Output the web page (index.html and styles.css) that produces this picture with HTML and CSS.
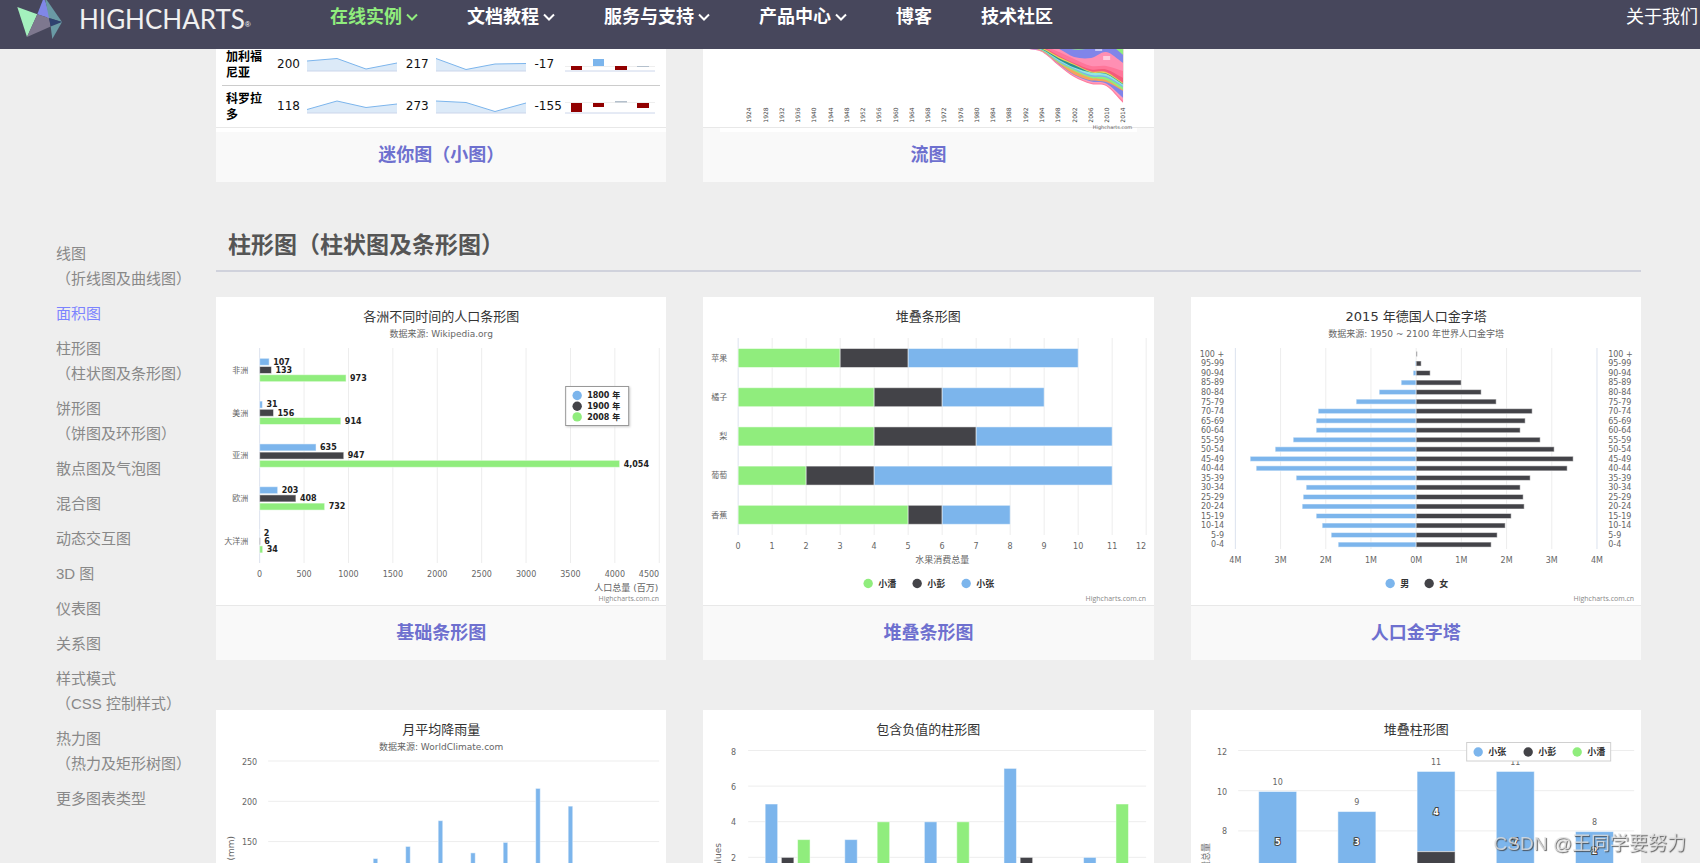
FILE: index.html
```html
<!DOCTYPE html>
<html lang="zh-CN">
<head>
<meta charset="utf-8">
<title>Highcharts 在线实例</title>
<link rel="stylesheet" href="styles.css">
</head>
<body>
<header class="topbar">
  <a class="logo" href="#" aria-label="Highcharts">
    <svg class="logo-mark" viewBox="16 0 48 40" aria-hidden="true">
      <path fill="#a4f0bd" d="M17.3 7 37.3 14.3 27 37z"/>
      <path fill="#8087e8" d="M44-3 37.3 14.3 49 18z"/>
      <path fill="#8087e8" d="M44-3 50.5 18.5 47 18z"/>
      <path fill="#6a9aa5" d="M44.7-3 62 22 49 18z"/>
      <path fill="#7e788f" d="M37.3 14.3 49 18 50.7 26.5 27 37z"/>
      <path fill="#2f4270" d="M49 18 62 22 50.7 26.5z"/>
      <path fill="#6a9aa5" d="M62 22 52.3 39 50.7 26.5z"/>
    </svg>
    <span class="wordmark">HIGHCHARTS</span><span class="reg">®</span>
  </a>
  <nav class="nav">
    <a class="nav-link active" href="#">在线实例<svg class="chevron" viewBox="0 0 12 8"><path d="M1 1.5 6 6.5 11 1.5"/></svg></a>
    <a class="nav-link" href="#">文档教程<svg class="chevron" viewBox="0 0 12 8"><path d="M1 1.5 6 6.5 11 1.5"/></svg></a>
    <a class="nav-link" href="#">服务与支持<svg class="chevron" viewBox="0 0 12 8"><path d="M1 1.5 6 6.5 11 1.5"/></svg></a>
    <a class="nav-link" href="#">产品中心<svg class="chevron" viewBox="0 0 12 8"><path d="M1 1.5 6 6.5 11 1.5"/></svg></a>
    <a class="nav-link" href="#">博客</a>
    <a class="nav-link" href="#">技术社区</a>
  </nav>
  <a class="about" href="#">关于我们</a>
</header>

<div class="page">
  <aside class="sidebar">
    <ul class="menu">
      <li><a href="#">线图<br>（折线图及曲线图）</a></li>
      <li><a class="current" href="#">面积图</a></li>
      <li><a href="#">柱形图<br>（柱状图及条形图）</a></li>
      <li><a href="#">饼形图<br>（饼图及环形图）</a></li>
      <li><a href="#">散点图及气泡图</a></li>
      <li><a href="#">混合图</a></li>
      <li><a href="#">动态交互图</a></li>
      <li><a href="#">3D 图</a></li>
      <li><a href="#">仪表图</a></li>
      <li><a href="#">关系图</a></li>
      <li><a href="#">样式模式<br>（CSS 控制样式）</a></li>
      <li><a href="#">热力图<br>（热力及矩形树图）</a></li>
      <li><a href="#">更多图表类型</a></li>
    </ul>
  </aside>

  <main class="content">
    <div class="cards">
      <article class="card">
        <div class="spark-wrap">
          <table class="spark">
            <tr>
              <th scope="row">加利福尼亚</th>
              <td>200</td>
              <td><svg class="mini" viewBox="0 0 90 16"><path class="fill" d="M0 5 30 2.5 59 13 90 7V15H0z"/><path class="line" d="M0 5 30 2.5 59 13 90 7"/><path class="base" d="M0 15H90"/></svg></td>
              <td>217</td>
              <td><svg class="mini" viewBox="0 0 90 16"><path class="fill" d="M0 2.5 30 13.5 59 8 90 7.500V15H0z"/><path class="line" d="M0 2.5 30 13.5 59 8 90 7.500"/><path class="base" d="M0 15H90"/></svg></td>
              <td>-17</td>
              <td><svg class="mini" viewBox="0 0 90 16"><path class="zero" d="M0 10.500H90"/><path class="base" d="M0 15H90"/><path class="neg" d="M6 10h11v4H6zM50 10h12v4H50z"/><path class="pos" d="M28 3h11v7H28z"/><path class="nil" d="M72 10h12v1H72z"/></svg></td>
            </tr>
            <tr>
              <th scope="row">科罗拉多</th>
              <td>118</td>
              <td><svg class="mini" viewBox="0 0 90 16"><path class="fill" d="M0 11.500 30 3 59 9.500 90 6V15H0z"/><path class="line" d="M0 11.500 30 3 59 9.500 90 6"/><path class="base" d="M0 15H90"/></svg></td>
              <td>273</td>
              <td><svg class="mini" viewBox="0 0 90 16"><path class="fill" d="M0 3 30 4.500 59 13.500 90 5V15H0z"/><path class="line" d="M0 3 30 4.500 59 13.500 90 5"/><path class="base" d="M0 15H90"/></svg></td>
              <td>-155</td>
              <td><svg class="mini" viewBox="0 0 90 16"><path class="zero" d="M0 4.500H90"/><path class="base" d="M0 15H90"/><path class="neg" d="M6 5h11v9H6zM28 5h11v4H28zM72 5h12v5H72z"/><path class="nil" d="M50 3h12v1.500H50z"/></svg></td>
            </tr>
          </table>
        </div>
        <h3 class="caption peek"><a href="#">迷你图（小图）</a></h3>
      </article>
      <article class="card">
        <svg class="chart short" id="stream" viewBox="0 0 450 78"></svg>
        <h3 class="caption peek inset"><a href="#">流图</a></h3>
      </article>
    </div>

    <h2 class="section-title">柱形图（柱状图及条形图）</h2>

    <div class="cards">
      <article class="card">
        <svg class="chart" id="bar" viewBox="0 0 450 308"></svg>
        <h3 class="caption"><a href="#">基础条形图</a></h3>
      </article>
      <article class="card">
        <svg class="chart" id="stacked-bar" viewBox="0 0 450 308"></svg>
        <h3 class="caption"><a href="#">堆叠条形图</a></h3>
      </article>
      <article class="card">
        <svg class="chart" id="pyramid" viewBox="0 0 450 308"></svg>
        <h3 class="caption"><a href="#">人口金字塔</a></h3>
      </article>
      <article class="card">
        <svg class="chart" id="rain" viewBox="0 0 450 308"></svg>
      </article>
      <article class="card">
        <svg class="chart" id="negative" viewBox="0 0 450 308"></svg>
      </article>
      <article class="card">
        <svg class="chart" id="stacked-column" viewBox="0 0 450 308"></svg>
      </article>
    </div>
  </main>
</div>
<div class="watermark">CSDN @王同学要努力</div>
<script src="charts.js"></script>
</body>
</html>
```

FILE: styles.css
```css
* {
  box-sizing: border-box;
}

body {
  margin: 0;
  height: 100vh;
  overflow: hidden;
  background: #eeeeee;
  font-family: "Liberation Sans", "Noto Sans CJK SC", sans-serif;
  color: #333;
}

a {
  color: inherit;
  text-decoration: none;
}

.topbar {
  display: flex;
  align-items: flex-start;
  height: 49px;
  padding: 0 2px 0 16px;
  background: #47475c;
  color: #fff;
}

.logo {
  display: flex;
  width: 314px;
  flex: none;
}

.logo-mark {
  width: 48px;
  height: 40px;
}

.wordmark {
  margin-left: 15px;
  font: 400 26px/38px Lato, sans-serif;
  color: #f0f0f0;
}

.reg {
  font-size: 8px;
  line-height: 50px;
}

.nav {
  display: flex;
  flex: 1;
  gap: 49px;
}

.nav-link {
  display: flex;
  align-items: center;
  gap: 4px;
  font-size: 18px;
  font-weight: 700;
  line-height: 34px;
}

.active {
  color: #90ed7d;
}

.chevron {
  width: 12px;
  height: 8px;
  fill: none;
  stroke: currentColor;
  stroke-width: 2;
}

.about {
  font-size: 18px;
  line-height: 34px;
}

.page {
  display: grid;
  grid-template-columns: 216px 1fr;
  padding-right: 59px;
}

.sidebar {
  padding: 192px 0 0 56px;
}

.menu {
  display: grid;
  gap: 10px;
  margin: 0;
  padding: 0;
  list-style: none;
  font-size: 15px;
  line-height: 25px;
  color: #888;
  white-space: nowrap;
}

.current {
  color: #7b83ff;
}

.cards {
  display: grid;
  grid-template-columns: repeat(3, minmax(0, 1fr));
  gap: 50px 37px;
}

.card {
  background: #fff;
}

.chart {
  display: block;
  width: 100%;
  height: 308px;
  font-family: "DejaVu Sans", "Noto Sans CJK SC", sans-serif;
  overflow: visible;
}

.short {
  position: relative;
  z-index: 1;
  height: 78px;
}

.caption {
  position: relative;
  margin: 0;
  border-top: 1px solid #e8e8e8;
  background: #f9f9f9;
  font-size: 18px;
  line-height: 54px;
  text-align: center;
  color: #6e70cf;
}

.peek::before {
  content: "";
  position: absolute;
  top: 0;
  left: 0;
  right: 0;
  height: 4px;
  background: #fff;
}

.inset::before {
  left: 17px;
  right: 17px;
}

.section-title {
  margin: 47px 0 25px;
  padding: 0 12px 9px;
  border-bottom: 2px solid #d0d2dc;
  font-size: 23px;
  line-height: 32px;
  color: #555;
}

.spark-wrap {
  height: 78px;
  padding: 0 6px;
}

.spark {
  width: 100%;
  border-collapse: collapse;
  table-layout: fixed;
  font-family: "DejaVu Sans", "Noto Sans CJK SC", sans-serif;
  font-size: 12px;
  line-height: 16px;
  color: #111;
}

.spark tr {
  height: 36px;
  border-bottom: 1px solid #ccc;
  vertical-align: top;
}

.spark tr + tr {
  height: 42px;
}

.spark th {
  width: 52px;
  padding: 0 10px 0 4px;
  text-align: left;
  color: #000;
}

.spark td {
  padding: 7px 0 0;
}

.spark tr + tr th {
  padding-top: 5px;
}

.spark tr + tr td {
  padding-top: 12px;
}

.spark td:nth-child(even) {
  width: 33px;
  padding-left: 3px;
}

.mini {
  display: block;
  width: 90px;
  height: 16px;
}

.fill {
  fill: #dceaf8;
}

.line {
  fill: none;
  stroke: #7cb5ec;
}

.base {
  stroke: #ccd6eb;
}

.zero {
  stroke: #eee;
}

.neg {
  fill: #910000;
}

.pos {
  fill: #7cb5ec;
}

.nil {
  fill: #b4c0cc;
}

.grid {
  stroke: #ededed;
}

.axis {
  stroke: #dce2ee;
}

.bar {
  stroke: #fff;
  stroke-opacity: 0.5;
}

.title {
  font-size: 13px;
  fill: #333;
}

.sub {
  font-size: 9px;
  fill: #666;
}

.label {
  font-size: 8px;
  fill: #666;
}

.value {
  font-size: 8px;
  font-weight: 700;
  fill: #222;
}

.key {
  font-size: 9px;
  font-weight: 700;
  fill: #333;
}

.inner {
  font-size: 8px;
  font-weight: 700;
  fill: #fff;
  stroke: #444;
  stroke-width: 2;
  paint-order: stroke;
}

.credit {
  font-family: "Open Sans", sans-serif;
  font-size: 7px;
  fill: #888;
}

.year {
  font-size: 6px;
  fill: #444;
}

.tiny {
  font-size: 5px;
  fill: #666;
}

.box {
  fill: #fff;
  stroke: #d0d0d0;
}

.box-dark {
  fill: #fff;
  stroke: #999;
  filter: drop-shadow(1px 1px 1px #ccc);
}

.watermark {
  position: fixed;
  right: 14px;
  bottom: 4px;
  z-index: 2;
  font-size: 19px;
  line-height: 30px;
  color: rgba(225, 225, 225, 0.8);
  text-shadow: 1px 1px 1px rgba(60, 60, 60, 0.8);
}
```

FILE: charts.js
```js
const BLUE = '#7cb5ec', DARK = '#434348', GREEN = '#90ed7d';
const SIZES = { title: 13, sub: 9, label: 8, value: 8, key: 9, inner: 8, credit: 7, year: 6, tiny: 5 };

// y is the vertical middle of the text
function text(x, y, str, cls, anchor = 'middle', turn = false) {
  const drop = SIZES[cls] * 0.36;
  const place = turn
    ? `transform="translate(${x + drop} ${y}) rotate(-90)"`
    : `x="${x}" y="${y + drop}"`;
  return `<text ${place} class="${cls}" text-anchor="${anchor}">${str}</text>`;
}
const line = (x1, y1, x2, y2, cls = 'grid') =>
  `<path class="${cls}" d="M${x1} ${y1}L${x2} ${y2}"/>`;
const rect = (x, y, w, h, fill) =>
  `<rect class="bar" x="${x}" y="${y}" width="${w}" height="${h}" fill="${fill}"/>`;
const dot = (x, y, fill) => `<circle cx="${x}" cy="${y}" r="4.7" fill="${fill}"/>`;
const credit = () => text(443, 301, 'Highcharts.com.cn', 'credit', 'end');
const draw = (id, parts) => { document.getElementById(id).innerHTML = parts.join(''); };

function bar() {
  const s = [text(225, 19, '各洲不同时间的人口条形图', 'title'), text(225, 37, '数据来源: Wikipedia.org', 'sub')];
  const x0 = 43.5, step = 44.4;
  for (let i = 0; i < 10; i++) {
    s.push(line(x0 + i * step, 51, x0 + i * step, 266, i ? 'grid' : 'axis'));
    s.push(i === 9 ? text(443, 277, '4500', 'label', 'end') : text(x0 + i * step, 277, i * 500, 'label'));
  }
  [['非洲', 107, 133, 973], ['美洲', 31, 156, 914], ['亚洲', 635, 947, 4054], ['欧洲', 203, 408, 732], ['大洋洲', 2, 6, 34]]
    .forEach(([name, ...vals], i) => {
      const cy = 73 + i * 42.8;
      s.push(text(32, cy, name, 'label', 'end'));
      vals.forEach((v, k) => {
        const y = cy + (k - 1) * 8.2, w = v * step / 500;
        s.push(rect(x0, y - 3.5, w, 7, [BLUE, DARK, GREEN][k]));
        s.push(text(x0 + w + 4, y, v.toLocaleString('en-US'), 'value', 'start'));
      });
    });
  s.push('<rect class="box-dark" x="349.5" y="89.5" width="63" height="39"/>');
  ['1800 年', '1900 年', '2008 年'].forEach((n, k) => {
    s.push(dot(361, 98.5 + k * 10.7, [BLUE, DARK, GREEN][k]), text(371, 98.5 + k * 10.7, n, 'value', 'start'));
  });
  s.push(text(442, 291, '人口总量 (百万)', 'sub', 'end'), credit());
  draw('bar', s);
}

function stackedBar() {
  const s = [text(225, 19, '堆叠条形图', 'title')];
  const x0 = 35, step = 34;
  for (let i = 0; i < 13; i++) {
    s.push(line(x0 + i * step, 41, x0 + i * step, 238, i ? 'grid' : 'axis'));
    s.push(i === 12 ? text(443, 249, '12', 'label', 'end') : text(x0 + i * step, 249, i, 'label'));
  }
  [['苹果', 3, 2, 5], ['橘子', 4, 2, 3], ['梨', 4, 3, 4], ['葡萄', 2, 2, 7], ['香蕉', 5, 1, 2]]
    .forEach(([name, ...vals], i) => {
      const cy = 61 + i * 39.2;
      let x = x0;
      s.push(text(24, cy, name, 'label', 'end'));
      vals.forEach((v, k) => {
        s.push(rect(x, cy - 9.5, v * step, 19, [GREEN, DARK, BLUE][k]));
        x += v * step;
      });
    });
  s.push(text(239, 263, '水果消费总量', 'sub'));
  [['小潘', 165, GREEN], ['小彭', 214, DARK], ['小张', 263, BLUE]]
    .forEach(([n, x, c]) => s.push(dot(x, 286.5, c), text(x + 10, 286.5, n, 'key', 'start')));
  s.push(credit());
  draw('stacked-bar', s);
}

function pyramid() {
  const s = [text(225, 19, '2015 年德国人口金字塔', 'title'), text(225, 37, '数据来源: 1950 ~ 2100 年世界人口金字塔', 'sub')];
  for (let i = -4; i <= 4; i++) {
    const x = 225 + i * 45.2;
    s.push(line(x, 51, x, 252, Math.abs(i) === 4 ? 'axis' : 'grid'), text(x, 263, Math.abs(i) + 'M', 'label'));
  }
  const male = [0, 1, 3, 15, 37, 60, 98, 100, 100, 123, 141, 166, 160, 120, 110, 113, 114, 100, 94, 85, 78];
  const female = [1, 5, 14, 45, 65, 80, 116, 109, 104, 124, 138, 157, 151, 114, 104, 107, 108, 95, 89, 81, 75];
  male.forEach((m, i) => {
    const low = 100 - i * 5, cy = 57 + i * 9.53;
    const name = i ? `${low}-${low + 4}` : '100 +';
    s.push(text(33, cy, name, 'label', 'end'), text(417, cy, name, 'label', 'start'));
    s.push(rect(225 - m, cy - 2.5, m, 5, BLUE), rect(225, cy - 2.5, female[i], 5, DARK));
  });
  s.push(dot(199, 286.5, BLUE), text(209, 286.5, '男', 'key', 'start'));
  s.push(dot(238, 286.5, DARK), text(248, 286.5, '女', 'key', 'start'));
  s.push(credit());
  draw('pyramid', s);
}

function rain() {
  const s = [text(225, 19, '月平均降雨量', 'title'), text(225, 37, '数据来源: WorldClimate.com', 'sub')];
  [250, 200, 150].forEach((v, i) => {
    s.push(line(52, 51 + i * 40.3, 443, 51 + i * 40.3), text(41, 52 + i * 40.3, v, 'label', 'end'));
  });
  [129, 144, 176, 136, 149, 216, 194].forEach((v, i) => {
    const y = 51 + (250 - v) * 0.806;
    s.push(rect(157 + i * 32.5, y, 4.6, 252 - y, BLUE));
  });
  s.push(text(15, 126, '降雨量 (mm)', 'sub', 'end', true));
  draw('rain', s);
}

function negative() {
  const s = [text(225, 19, '包含负值的柱形图', 'title')];
  [8, 6, 4, 2].forEach((v, i) => {
    s.push(line(45, 40.5 + i * 35.6, 443, 40.5 + i * 35.6), text(33, 42 + i * 35.3, v, 'label', 'end'));
  });
  [[5, 2, 3], [3, 0, 4], [4, 0, 4], [7, 2, 0], [2, 0, 5]].forEach((vals, i) => {
    vals.forEach((v, k) => {
      if (v) s.push(rect(62 + i * 79.6 + k * 16.2, 183 - v * 17.8, 12.5, v * 17.8, [BLUE, DARK, GREEN][k]));
    });
  });
  s.push(text(15, 133, 'Values', 'sub', 'end', true));
  draw('negative', s);
}

function stackedColumn() {
  const s = [text(225, 19, '堆叠柱形图', 'title')];
  [12, 10, 8].forEach((v, i) => {
    s.push(line(47, 40.5 + i * 40.2, 443, 40.5 + i * 40.2), text(36, 42 + i * 39.7, v, 'label', 'end'));
  });
  [[10, 5, 132], [9, 3, 132], [11, 4, 102], [11, 7, 132], [8, 2, 141]].forEach(([total, v, ly], i) => {
    const cx = 86.5 + i * 79.2, top = 282 - total * 20.05, h = v * 20.05;
    s.push(rect(cx - 19, top, 38, h, BLUE), text(cx, top - 9, total, 'label'));
    s.push(rect(cx - 19, top + h, 38, 100, DARK), text(cx, ly, v, 'inner'));
  });
  s.push('<rect class="box" x="275.5" y="32.5" width="144" height="18.5"/>');
  [['小张', 287, BLUE], ['小彭', 337, DARK], ['小潘', 386, GREEN]]
    .forEach(([n, x, c]) => s.push(dot(x, 42, c), text(x + 10, 42, n, 'key', 'start')));
  s.push(text(15, 133, '水果消费总量', 'sub', 'end', true));
  draw('stacked-column', s);
}

function stream() {
  const xs = [326, 339, 356, 371, 388, 403, 420];
  const layers = [
    ['#ff7a9c', [0, 3, 17, 28, 35, 37, 54]],
    ['#ff9ab8', [0, 2.5, 16, 27, 34, 36, 52]],
    ['#8085e9', [0, 2, 15.5, 26, 32.5, 34.5, 49]],
    ['#f7a35c', [-1, 2, 15, 25.5, 31.5, 33, 42]],
    ['#90ed7d', [-1, 1.5, 14, 22, 29, 31, 41]],
    ['#7cb5ec', [-1, 1, 13, 20.5, 27.5, 28.5, 38.5]],
    ['#91e8e1', [-1, 1, 12, 19.5, 26, 27, 37]],
    ['#2b908f', [-1, 0.5, 11, 18.5, 23.5, 25, 35.5]],
    ['#e4d354', [-2, 0, 9.5, 16, 23.5, 24.5, 35]],
    ['#f45b7b', [-2, -1, 8, 15, 22.5, 23, 34]],
    ['#ff7599', [-2, -2, 7, 14, 20.5, 20.5, 29]],
    ['#ff8fb3', [-3, -3, 3, 10, 17, 17, 22]],
    ['#8085e9', [-8, -6, 0, 8, 9, 3, 14]]
  ];
  // smooth curve with the tangent at each point taken from its neighbours
  const curve = ys => {
    const slope = i => {
      const a = Math.max(i - 1, 0), b = Math.min(i + 1, xs.length - 1);
      return (ys[b] - ys[a]) / (xs[b] - xs[a]);
    };
    return xs.slice(1).reduce((d, x, i) => {
      const t = (x - xs[i]) / 3;
      return d + `C${xs[i] + t} ${ys[i] + slope(i) * t} ${x - t} ${ys[i + 1] - slope(i + 1) * t} ${x} ${ys[i + 1]}`;
    }, `M${xs[0]} ${ys[0]}`);
  };
  const s = ['<clipPath id="plot"><rect width="420" height="78"/></clipPath><g clip-path="url(#plot)">'];
  layers.forEach(([c, ys]) => s.push(`<path fill="${c}" d="${curve(ys)}V-9H326z"/>`));
  s.push('<path fill="#90ed7d" d="M413 0h7v6zM368 0h14q-7 1.500-14 0z"/>');
  s.push('<path fill="#fff" fill-opacity=".55" d="M400 7h7v4h-7zM392 0h7v2h-7z"/></g>');
  [1924, 1928, 1932, 1936, 1940, 1944, 1948, 1952, 1956, 1960, 1964, 1968, 1972, 1976, 1980, 1984,
    1988, 1992, 1994, 1998, 2002, 2006, 2010, 2014].forEach((y, i) => {
    s.push(text(46 + i * 16.26, 66, y, 'year', 'middle', true));
  });
  s.push(text(429, 78, 'Highcharts.com', 'tiny', 'end'));
  draw('stream', s);
}

bar();
stackedBar();
pyramid();
rain();
negative();
stackedColumn();
stream();
```
